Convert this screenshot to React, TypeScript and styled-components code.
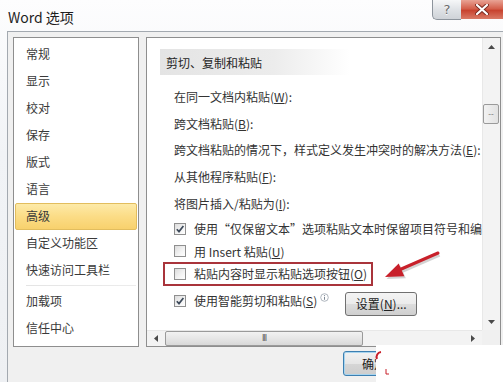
import React from 'react';
import styled, { createGlobalStyle } from 'styled-components';

const Global = createGlobalStyle`
  html, body { margin: 0; padding: 0; width: 503px; height: 382px; overflow: hidden; background: #f4f6f8; }
  * { box-sizing: border-box; }
`;

const Window = styled.div`
  position: relative;
  width: 503px;
  height: 382px;
  overflow: hidden;
  display: flex;
  flex-direction: column;
  background: linear-gradient(180deg, #fdfdfe 0%, #f1f3f6 40%, #eef0f3 100%);
  font-family: "Noto Sans CJK SC", "Noto Sans", sans-serif;
  color: #333;
`;

const TitleBar = styled.div`
  height: 31px;
  flex-shrink: 0;
  display: flex;
  justify-content: space-between;
  align-items: flex-start;
`;

const Title = styled.div`
  font-size: 14px;
  line-height: 14px;
  padding: 10px 0 0 8px;
  color: #1e1e1e;
`;

const Controls = styled.div`
  display: flex;
  align-items: flex-start;
`;

const HelpBtn = styled.div`
  width: 29px;
  height: 20px;
  border: 1px solid #8d949c;
  border-top: none;
  border-right: none;
  border-radius: 0 0 0 5px;
  background: linear-gradient(180deg, #f6f7f8 0%, #dfe2e6 50%, #cfd3d8 100%);
  display: flex;
  align-items: center;
  justify-content: center;
  font-family: "DejaVu Sans", sans-serif;
  font-size: 13px;
  color: #6a6a6a;
  text-shadow: 0 1px 0 #fff;
`;

const CloseBtn = styled.div`
  width: 42px;
  height: 19px;
  background: linear-gradient(180deg, #e9a395 0%, #d4604c 45%, #c8432f 55%, #d97a66 100%);
  display: flex;
  align-items: center;
  justify-content: center;
`;

const Content = styled.div`
  flex: 1;
  margin-left: 7px;
  border-top: 1px solid #a3a9b0;
  border-left: 1px solid #a3a9b0;
  background: #f0f0f0;
  display: flex;
  flex-direction: column;
`;

const Panels = styled.div`
  display: flex;
  gap: 7px;
  padding: 5px 0 0 5px;
  height: 315px;
  flex-shrink: 0;
`;

const Nav = styled.div`
  width: 126px;
  height: 310px;
  border: 1px solid #8e8e8e;
  background: #fff;
  padding-top: 2.5px;
  display: flex;
  flex-direction: column;
`;

const NavItem = styled.div<{ $active?: boolean }>`
  height: 27px;
  margin: 0 1px;
  padding-left: 10px;
  display: flex;
  align-items: center;
  font-size: 12px;
  line-height: 14px;
  color: #3a3a3a;
  border: 1px solid ${p => (p.$active ? '#e2bd5e' : 'transparent')};
  border-radius: 2px;
  background: ${p => (p.$active ? 'linear-gradient(180deg, #fdeaa8 0%, #fbdc86 50%, #f8d16d 100%)' : 'transparent')};
`;

const NavSep = styled.div`
  height: 1px;
  margin: 1px 2px 2px 12px;
  background: linear-gradient(90deg, #e4e4e4 0%, #ececec 100%);
`;

const Right = styled.div`
  width: 355px;
  height: 310px;
  border: 1px solid #8e8e8e;
  background: #fff;
  display: grid;
  grid-template-columns: 335px 18px;
  grid-template-rows: 292px 16px;
`;

const Scroll = styled.div`
  overflow: hidden;
  display: flex;
  flex-direction: column;
`;

const Heading = styled.div`
  margin: 11px 0 8px 13px;
  width: 190px;
  height: 26px;
  padding-left: 6px;
  display: flex;
  align-items: center;
  font-size: 12px;
  color: #262626;
  background: linear-gradient(90deg, #e4e4e4 0%, #ececec 60%, rgba(240,240,240,0) 100%);
`;

const TextRow = styled.div`
  height: 26.75px;
  padding-left: 27px;
  display: flex;
  align-items: center;
  font-size: 12px;
  white-space: nowrap;
  color: #333;
`;

const CheckRow = styled.div<{ $h: number }>`
  height: ${p => p.$h}px;
  padding-left: 27px;
  display: flex;
  align-items: center;
  gap: 8px;
  font-size: 12px;
  white-space: nowrap;
  color: #333;
`;

const Boxed = styled.div`
  height: 24px;
  width: 210px;
  margin-left: 16px;
  padding-left: 9px;
  border: 2px solid #a9343b;
  display: flex;
  align-items: center;
  gap: 8px;
  font-size: 12px;
  white-space: nowrap;
  color: #333;
`;

const U = styled.span`
  text-decoration: underline;
`;

const Box = styled.span`
  width: 12px;
  height: 12px;
  flex-shrink: 0;
  border: 1px solid #8f8f8f;
  background: linear-gradient(135deg, #dcdcdc 0%, #f4f4f4 60%, #ffffff 100%);
  display: flex;
  align-items: center;
  justify-content: center;
`;

const Info = styled.span`
  align-self: flex-start;
  margin: 7px 0 0 -5px;
  display: flex;
`;

const SetBtn = styled.div`
  margin: 6px 0 0 8px;
  width: 72px;
  height: 24px;
  border: 1px solid #707070;
  border-radius: 3px;
  background: linear-gradient(180deg, #f4f4f4 0%, #ebebeb 50%, #dddddd 51%, #cfcfcf 100%);
  display: flex;
  align-items: center;
  justify-content: center;
  font-size: 12px;
  color: #222;
`;

const VBar = styled.div`
  background: #f3f3f3;
  border-left: 1px solid #e8e8e8;
  display: flex;
  flex-direction: column;
`;

const Arrow = styled.div<{ $h?: number; $w?: number }>`
  width: ${p => p.$w ?? 17}px;
  height: ${p => p.$h ?? 17}px;
  flex-shrink: 0;
  display: flex;
  align-items: center;
  justify-content: center;
`;

const VThumb = styled.div`
  margin-top: 49px;
  width: 16px;
  height: 20px;
  border: 1px solid #9a9a9a;
  border-radius: 2px;
  background: linear-gradient(90deg, #f2f2f2 0%, #e2e2e2 100%);
  display: flex;
  align-items: center;
  justify-content: center;
  font-size: 8px;
  color: #666;
  line-height: 8px;
`;

const Spacer = styled.div`
  flex: 1;
`;

const HBar = styled.div`
  background: #f3f3f3;
  border-top: 1px solid #e8e8e8;
  display: flex;
  align-items: center;
`;

const HThumb = styled.div`
  width: 198px;
  height: 15px;
  border: 1px solid #9a9a9a;
  border-radius: 2px;
  background: linear-gradient(180deg, #f2f2f2 0%, #e6e6e6 50%, #d8d8d8 100%);
  display: flex;
  align-items: center;
  justify-content: center;
  font-family: "DejaVu Sans", sans-serif;
  font-size: 8px;
  letter-spacing: -1px;
  color: #555;
`;

const Corner = styled.div`
  background: #f0f0f0;
`;

const Bottom = styled.div`
  flex: 1;
  padding: 4px 0 0 335px;
`;

const OkBtn = styled.div`
  width: 72px;
  height: 25px;
  border: 1px solid #3c7fb1;
  border-radius: 3px;
  box-shadow: inset 0 0 0 1px #a8d4ee;
  background: linear-gradient(180deg, #f2f2f2 0%, #e6e6e6 50%, #d6d6d6 51%, #cdcdcd 100%);
  display: flex;
  align-items: center;
  padding-left: 18px;
  font-size: 12px;
  color: #222;
`;

const Cover = styled.div`
  position: absolute;
  left: 376px;
  top: 345px;
  right: 0;
  bottom: 0;
  background: #fff;
`;

const Logo = styled.svg`
  position: absolute;
  left: 372px;
  top: 350px;
`;

const ArrowSvg = styled.svg`
  position: absolute;
  left: 370px;
  top: 245px;
`;

const Check = ({ on }: { on?: boolean }) => (
  <Box>
    {on && (
      <svg width="10" height="10" viewBox="0 0 10 10">
        <path d="M1.8 5.2 L4 7.6 L8.4 2" fill="none" stroke="#3d4a5a" strokeWidth="1.7" />
      </svg>
    )}
  </Box>
);

const Tri = ({ dir }: { dir: 'up' | 'down' | 'left' | 'right' }) => {
  const pts: Record<string, string> = {
    up: '0,4 3.5,0 7,4',
    down: '0,0 7,0 3.5,4',
    left: '4,0 4,7 0,3.5',
    right: '0,0 0,7 4,3.5',
  };
  const w = dir === 'up' || dir === 'down' ? 7 : 4;
  const h = dir === 'up' || dir === 'down' ? 4 : 7;
  return (
    <svg width={w} height={h} viewBox={`0 0 ${w} ${h}`}>
      <polygon points={pts[dir]} fill="#4a4a4a" />
    </svg>
  );
};

const nav = ['常规', '显示', '校对', '保存', '版式', '语言', '高级', '自定义功能区', '快速访问工具栏'];

export default function App() {
  return (
    <>
      <Global />
      <Window>
        <TitleBar>
          <Title>Word 选项</Title>
          <Controls>
            <HelpBtn>?</HelpBtn>
            <CloseBtn>
              <svg width="14" height="11" viewBox="0 0 14 11">
                <path d="M2 1 L12 10 M12 1 L2 10" stroke="#7a2a20" strokeWidth="4" strokeLinecap="round" />
                <path d="M2 1 L12 10 M12 1 L2 10" stroke="#ffffff" strokeWidth="2.2" strokeLinecap="round" />
              </svg>
            </CloseBtn>
          </Controls>
        </TitleBar>
        <Content>
          <Panels>
            <Nav>
              {nav.map(n => (
                <NavItem key={n} $active={n === '高级'}>{n}</NavItem>
              ))}
              <NavSep />
              <NavItem>加载项</NavItem>
              <NavItem>信任中心</NavItem>
            </Nav>
            <Right>
              <Scroll>
                <Heading>剪切、复制和粘贴</Heading>
                <TextRow>在同一文档内粘贴(<U>W</U>):</TextRow>
                <TextRow>跨文档粘贴(<U>B</U>):</TextRow>
                <TextRow>跨文档粘贴的情况下，样式定义发生冲突时的解决方法(<U>E</U>):</TextRow>
                <TextRow>从其他程序粘贴(<U>F</U>):</TextRow>
                <TextRow>将图片插入/粘贴为(<U>I</U>):</TextRow>
                <CheckRow $h={24}>
                  <Check on />
                  <span>使用“仅保留文本”选项粘贴文本时保留项目符号和编号</span>
                </CheckRow>
                <CheckRow $h={21}>
                  <Check />
                  <span>用 Insert 粘贴(<U>U</U>)</span>
                </CheckRow>
                <Boxed>
                  <Check />
                  <span>粘贴内容时显示粘贴选项按钮(<U>O</U>)</span>
                </Boxed>
                <CheckRow $h={30}>
                  <Check on />
                  <span>使用智能剪切和粘贴(<U>S</U>)</span>
                  <Info>
                    <svg width="9" height="9" viewBox="0 0 9 9">
                      <circle cx="4.5" cy="4.5" r="3.8" fill="#fff" stroke="#9aa3ad" strokeWidth="0.8" />
                      <path d="M4.5 3.8 V6.8" stroke="#7d8894" strokeWidth="1" />
                      <circle cx="4.5" cy="2.5" r="0.6" fill="#7d8894" />
                    </svg>
                  </Info>
                  <SetBtn>设置(<U>N</U>)...</SetBtn>
                </CheckRow>
              </Scroll>
              <VBar>
                <Arrow><Tri dir="up" /></Arrow>
                <VThumb>--</VThumb>
                <Spacer />
                <Arrow><Tri dir="down" /></Arrow>
              </VBar>
              <HBar>
                <Arrow $w={18} $h={15}><Tri dir="left" /></Arrow>
                <HThumb>III</HThumb>
                <Spacer />
                <Arrow $w={18} $h={15}><Tri dir="right" /></Arrow>
              </HBar>
              <Corner />
            </Right>
          </Panels>
          <Bottom>
            <OkBtn>确定</OkBtn>
          </Bottom>
        </Content>
        <ArrowSvg width="75" height="40" viewBox="370 245 75 40">
          <g opacity="0.25" transform="translate(1.5,2)">
            <path d="M438 253 L399 270" stroke="#555" strokeWidth="3.5" />
            <polygon points="385,277 404.3,276.3 398.7,263.5" fill="#555" />
          </g>
          <path d="M438 253 L399 270" stroke="#c8202a" strokeWidth="3" strokeLinecap="round" />
          <polygon points="385,277 404.3,276.3 398.7,263.5" fill="#c8202a" />
        </ArrowSvg>
        <Cover />
        <Logo width="20" height="28" viewBox="0 0 20 28">
          <path d="M9 2 A5 5 0 0 0 5 9" fill="none" stroke="#c8202a" strokeWidth="2" />
          <path d="M14 19 V24 H17" fill="none" stroke="#c8202a" strokeWidth="1" />
        </Logo>
      </Window>
    </>
  );
}
